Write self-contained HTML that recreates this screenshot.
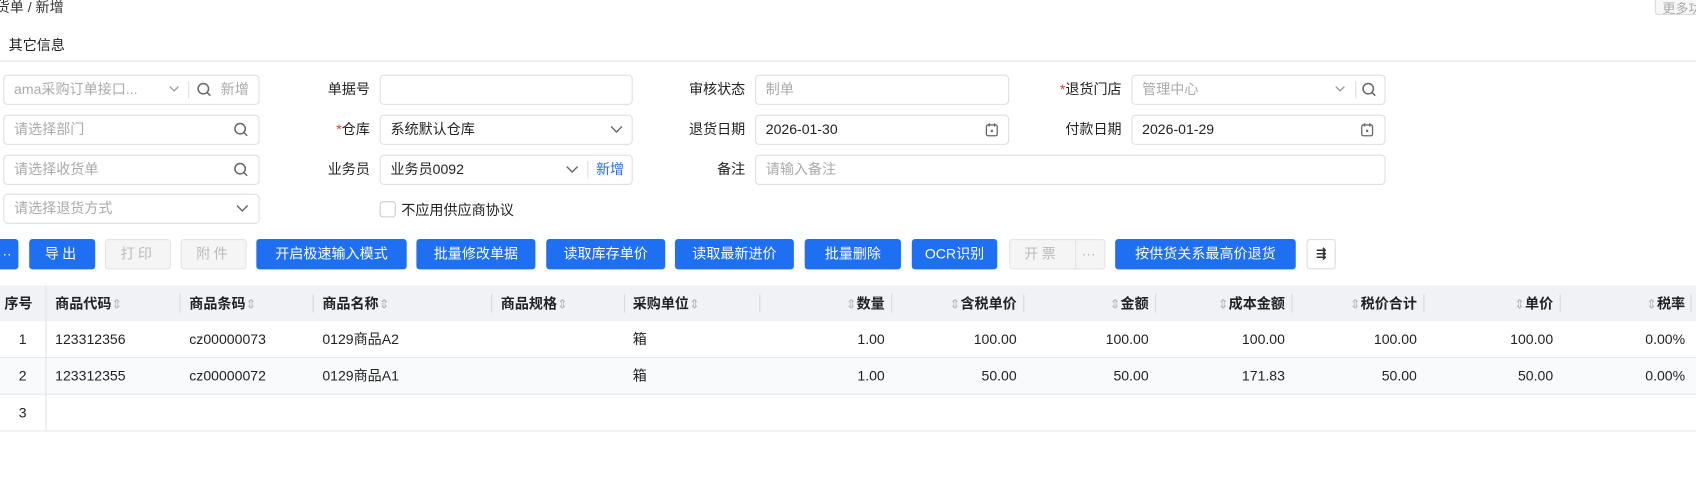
<!DOCTYPE html>
<html><head><meta charset="utf-8"><style>
*{box-sizing:border-box;margin:0;padding:0}
body{width:1696px;height:504px;overflow:hidden;background:#fff;font-family:"Liberation Sans","Noto Sans CJK SC",sans-serif;color:#222}
#w{position:absolute;left:0;top:0;width:1568px;height:466px;transform:scale(1.0816);transform-origin:0 0;font-size:13px}
.a{position:absolute;white-space:nowrap}
.inp{position:absolute;height:28px;border:1px solid #dcdfe6;border-radius:4px;background:#fff;padding-left:9px;line-height:26px;color:#222}
.ph{color:#aaa}
.lbl{position:absolute;text-align:right;line-height:28px;width:100px}
.req{color:#e33}
.btn{position:absolute;top:221px;height:28px;line-height:28px;border-radius:3px;background:#1f6ff2;color:#fff;text-align:center;font-size:13px}
.dis{background:#f5f5f5;color:#bbb;border:1px solid #e3e3e3;line-height:26px;letter-spacing:3px}
.th{position:absolute;top:264px;height:33px;line-height:33px;font-weight:bold}
.td{position:absolute;line-height:34px}
.r{text-align:right}
.sep{position:absolute;top:272px;width:1px;height:17px;background:#d8d8d8}
.sr{color:#b5b5b5;font-weight:normal;font-size:12px}
svg{position:absolute}
</style></head><body><div id="w">
<div class="a" style="left:-4px;top:-4px;font-size:13px;color:#333">货单 / 新增</div>
<div class="a" style="left:1530px;top:-8px;width:50px;height:22px;border:1px solid #ddd;border-radius:3px;background:#f7f7f7;color:#aaa;font-size:12px;padding:6px 6px 0">更多功</div>
<div class="a" style="left:8px;top:31px;font-size:13px">其它信息</div>
<div class="a" style="left:0;top:56px;width:1568px;height:1px;background:#e0e0e0"></div>

<div class="inp ph" style="left:3px;top:69px;width:237px">ama采购订单接口...</div>
<div class="a" style="left:174px;top:75px;width:1px;height:16px;background:#ddd"></div>
<div class="a ph" style="left:204px;top:73px;line-height:20px">新增</div>
<svg style="left:156px;top:78px" width="10" height="8"><path d="M1 2l4 4 4-4" fill="none" stroke="#999" stroke-width="1.2"/></svg>
<svg style="left:182px;top:76px" width="14" height="14"><circle cx="6" cy="6" r="4.8" fill="none" stroke="#666" stroke-width="1.4"/><path d="M9.5 9.5l3 3" stroke="#666" stroke-width="1.4"/></svg>
<div class="inp ph" style="left:3px;top:106px;width:237px">请选择部门</div>
<svg style="left:216px;top:113px" width="14" height="14"><circle cx="6" cy="6" r="4.8" fill="none" stroke="#666" stroke-width="1.4"/><path d="M9.5 9.5l3 3" stroke="#666" stroke-width="1.4"/></svg>
<div class="inp ph" style="left:3px;top:143px;width:237px">请选择收货单</div>
<svg style="left:216px;top:150px" width="14" height="14"><circle cx="6" cy="6" r="4.8" fill="none" stroke="#666" stroke-width="1.4"/><path d="M9.5 9.5l3 3" stroke="#666" stroke-width="1.4"/></svg>
<div class="inp ph" style="left:3px;top:179px;width:237px">请选择退货方式</div>
<svg style="left:218px;top:189px" width="12" height="8"><path d="M1 1l5 5 5-5" fill="none" stroke="#666" stroke-width="1.3"/></svg>

<div class="lbl" style="left:242px;top:69px">单据号</div>
<div class="inp" style="left:351px;top:69px;width:234px"></div>
<div class="lbl" style="left:242px;top:106px"><span class="req">*</span>仓库</div>
<div class="inp" style="left:351px;top:106px;width:234px">系统默认仓库</div>
<svg style="left:564px;top:116px" width="12" height="8"><path d="M1 1l5 5 5-5" fill="none" stroke="#666" stroke-width="1.3"/></svg>
<div class="lbl" style="left:242px;top:143px">业务员</div>
<div class="inp" style="left:351px;top:143px;width:234px">业务员0092</div>
<svg style="left:523px;top:153px" width="12" height="8"><path d="M1 1l5 5 5-5" fill="none" stroke="#666" stroke-width="1.3"/></svg>
<div class="a" style="left:543px;top:149px;width:1px;height:16px;background:#ddd"></div>
<div class="a" style="left:551px;top:147px;line-height:20px;color:#1f6ff2">新增</div>
<div class="a" style="left:351px;top:186px;width:15px;height:15px;border:1px solid #ccc;border-radius:3px"></div>
<div class="a" style="left:371px;top:184px">不应用供应商协议</div>

<div class="lbl" style="left:589px;top:69px">审核状态</div>
<div class="inp ph" style="left:698px;top:69px;width:235px">制单</div>
<div class="lbl" style="left:589px;top:106px">退货日期</div>
<div class="inp" style="left:698px;top:106px;width:235px">2026-01-30</div>
<svg style="left:910px;top:113px" width="14" height="14"><rect x="2" y="2.5" width="10" height="10" rx="1.5" fill="none" stroke="#666" stroke-width="1.2"/><path d="M4.5 1v3M9.5 1v3" stroke="#666" stroke-width="1.2"/><rect x="6" y="7" width="2" height="2" fill="#666"/></svg>
<div class="lbl" style="left:589px;top:143px">备注</div>
<div class="inp ph" style="left:698px;top:143px;width:583px">请输入备注</div>

<div class="lbl" style="left:937px;top:69px"><span class="req">*</span>退货门店</div>
<div class="inp ph" style="left:1046px;top:69px;width:235px">管理中心</div>
<svg style="left:1234px;top:78px" width="10" height="8"><path d="M1 2l4 4 4-4" fill="none" stroke="#999" stroke-width="1.2"/></svg>
<div class="a" style="left:1253px;top:75px;width:1px;height:16px;background:#ddd"></div>
<svg style="left:1259px;top:76px" width="14" height="14"><circle cx="6" cy="6" r="4.8" fill="none" stroke="#666" stroke-width="1.4"/><path d="M9.5 9.5l3 3" stroke="#666" stroke-width="1.4"/></svg>
<div class="lbl" style="left:937px;top:106px">付款日期</div>
<div class="inp" style="left:1046px;top:106px;width:235px">2026-01-29</div>
<svg style="left:1257px;top:113px" width="14" height="14"><rect x="2" y="2.5" width="10" height="10" rx="1.5" fill="none" stroke="#666" stroke-width="1.2"/><path d="M4.5 1v3M9.5 1v3" stroke="#666" stroke-width="1.2"/><rect x="6" y="7" width="2" height="2" fill="#666"/></svg>

<div class="btn" style="left:-4px;width:21px">··</div>
<div class="btn" style="left:27px;width:61px;letter-spacing:3px">导出</div>
<div class="btn dis" style="left:97px;width:61px">打印</div>
<div class="btn dis" style="left:167px;width:61px">附件</div>
<div class="btn" style="left:237px;width:139px">开启极速输入模式</div>
<div class="btn" style="left:385px;width:110px">批量修改单据</div>
<div class="btn" style="left:505px;width:110px">读取库存单价</div>
<div class="btn" style="left:624px;width:110px">读取最新进价</div>
<div class="btn" style="left:744px;width:89px">批量删除</div>
<div class="btn" style="left:843px;width:79px">OCR识别</div>
<div class="btn dis" style="left:933px;width:89px;text-align:left;padding-left:13px">开票<span style="position:absolute;left:60px;top:-1px;width:1px;height:28px;background:#e3e3e3"></span><span style="position:absolute;left:66px;letter-spacing:0">···</span></div>
<div class="btn" style="left:1031px;width:167px">按供货关系最高价退货</div>
<div class="btn" style="left:1208px;width:27px;background:#fff;border:1px solid #ddd;color:#333;line-height:26px;font-size:11px;font-weight:bold">⇶</div>

<div class="a" style="left:0;top:264px;width:1568px;height:33px;background:#f1f2f5"></div>
<div class="a" style="left:0;top:331px;width:1568px;height:34px;background:#f9fafb"></div>
<div class="a" style="left:0;top:330px;width:1568px;height:1px;background:#e8e8e8"></div>
<div class="a" style="left:0;top:364px;width:1568px;height:1px;background:#e8e8e8"></div>
<div class="a" style="left:0;top:398px;width:1568px;height:1px;background:#e8e8e8"></div>
<div class="a" style="left:42px;top:264px;width:1px;height:135px;background:#e2e2e2"></div>

<div class="th" style="left:4px">序号</div>
<div class="th" style="left:51px">商品代码<span class="sr">⇕</span></div><div class="sep" style="left:166px"></div>
<div class="th" style="left:175px">商品条码<span class="sr">⇕</span></div><div class="sep" style="left:289px"></div>
<div class="th" style="left:298px">商品名称<span class="sr">⇕</span></div><div class="sep" style="left:454px"></div>
<div class="th" style="left:463px">商品规格<span class="sr">⇕</span></div><div class="sep" style="left:577px"></div>
<div class="th" style="left:585px">采购单位<span class="sr">⇕</span></div><div class="sep" style="left:702px"></div>
<div class="th r" style="left:718px;width:100px"><span class="sr">⇕</span>数量</div><div class="sep" style="left:824px"></div>
<div class="th r" style="left:840px;width:100px"><span class="sr">⇕</span>含税单价</div><div class="sep" style="left:946px"></div>
<div class="th r" style="left:962px;width:100px"><span class="sr">⇕</span>金额</div><div class="sep" style="left:1068px"></div>
<div class="th r" style="left:1088px;width:100px"><span class="sr">⇕</span>成本金额</div><div class="sep" style="left:1194px"></div>
<div class="th r" style="left:1210px;width:100px"><span class="sr">⇕</span>税价合计</div><div class="sep" style="left:1316px"></div>
<div class="th r" style="left:1336px;width:100px"><span class="sr">⇕</span>单价</div><div class="sep" style="left:1442px"></div>
<div class="th r" style="left:1458px;width:100px"><span class="sr">⇕</span>税率</div><div class="sep" style="left:1563px"></div>

<div class="td" style="left:0;width:42px;text-align:center;top:297px">1</div>
<div class="td" style="left:51px;top:297px">123312356</div>
<div class="td" style="left:175px;top:297px">cz00000073</div>
<div class="td" style="left:298px;top:297px">0129商品A2</div>
<div class="td" style="left:585px;top:297px">箱</div>
<div class="td r" style="left:718px;width:100px;top:297px">1.00</div>
<div class="td r" style="left:840px;width:100px;top:297px">100.00</div>
<div class="td r" style="left:962px;width:100px;top:297px">100.00</div>
<div class="td r" style="left:1088px;width:100px;top:297px">100.00</div>
<div class="td r" style="left:1210px;width:100px;top:297px">100.00</div>
<div class="td r" style="left:1336px;width:100px;top:297px">100.00</div>
<div class="td r" style="left:1458px;width:100px;top:297px">0.00%</div>

<div class="td" style="left:0;width:42px;text-align:center;top:331px">2</div>
<div class="td" style="left:51px;top:331px">123312355</div>
<div class="td" style="left:175px;top:331px">cz00000072</div>
<div class="td" style="left:298px;top:331px">0129商品A1</div>
<div class="td" style="left:585px;top:331px">箱</div>
<div class="td r" style="left:718px;width:100px;top:331px">1.00</div>
<div class="td r" style="left:840px;width:100px;top:331px">50.00</div>
<div class="td r" style="left:962px;width:100px;top:331px">50.00</div>
<div class="td r" style="left:1088px;width:100px;top:331px">171.83</div>
<div class="td r" style="left:1210px;width:100px;top:331px">50.00</div>
<div class="td r" style="left:1336px;width:100px;top:331px">50.00</div>
<div class="td r" style="left:1458px;width:100px;top:331px">0.00%</div>

<div class="td" style="left:0;width:42px;text-align:center;top:365px">3</div>
</div></body></html>
